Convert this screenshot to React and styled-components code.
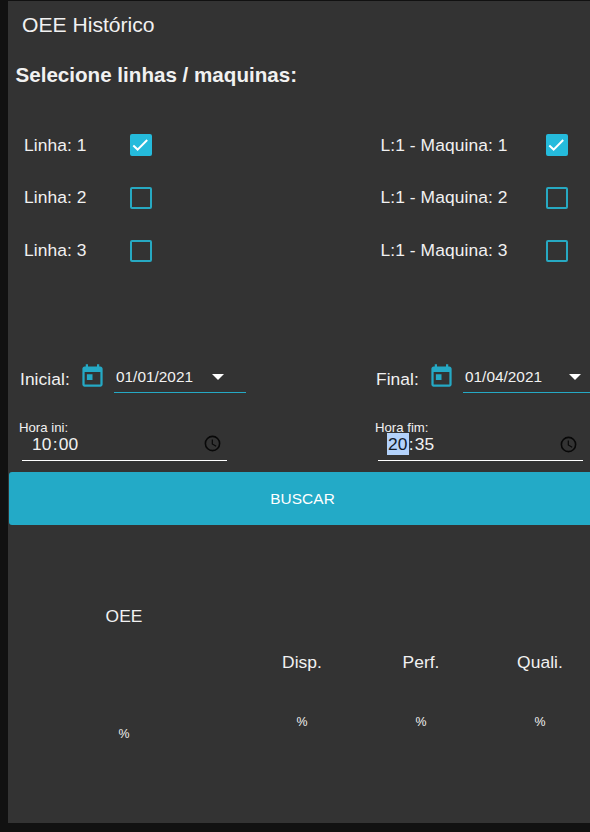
import React from "react";
import styled, { createGlobalStyle } from "styled-components";

const GlobalStyle = createGlobalStyle`
  * { box-sizing: border-box; }
  body {
    margin: 0;
    background: #111;
    color: #f1f1f1;
    font-family: "Liberation Sans", Arial, sans-serif;
    overflow: hidden;
  }
`;

const Page = styled.div`
  height: 832px;
  padding: 1px 0 9px 8px;
  overflow: hidden;
`;

const Panel = styled.main`
  height: 822px;
  background: #333;
`;

const Title = styled.h1`
  margin: 0;
  padding: 12px 0 0 14px;
  font-size: 21.12px;
  font-weight: 400;
  line-height: 24px;
`;

const Subtitle = styled.h2`
  margin: 0;
  padding: 26px 0 0 7.5px;
  font-size: 20.6px;
  font-weight: 700;
  line-height: 24px;
`;

const Selection = styled.section`
  display: grid;
  grid-template-columns: 356px 1fr;
  height: 272px;
  padding-top: 32px;
`;

const CheckList = styled.div`
  display: grid;
  grid-auto-rows: 52.7px;
  align-content: start;
  padding-left: 16px;
`;

const CheckRow = styled.label`
  display: flex;
  align-items: center;
  font-size: 17.4px;
  letter-spacing: 0.08px;
  line-height: 22px;
`;

const CheckText = styled.span`
  width: ${(p) => p.$width}px;
  padding: 0 0 1.2px ${(p) => p.$indent || 0}px;
  white-space: nowrap;
`;

const Box = styled.span`
  display: flex;
  width: 22px;
  height: 22px;
  border: 2px solid ${(p) => (p.$checked ? "#25bbdc" : "#27a9c2")};
  border-radius: 2px;
  background: ${(p) => (p.$checked ? "#25bbdc" : "transparent")};
  svg { width: 18px; height: 18px; }
`;

const Dates = styled.section`
  display: grid;
  grid-template-columns: 356px 1fr;
  height: 34px;
`;

const DateField = styled.div`
  display: flex;
  padding-left: 12px;
`;

const DateLabel = styled.span`
  flex: none;
  width: ${(p) => p.$width}px;
  padding-top: 9px;
  font-size: 17.4px;
  letter-spacing: 0.06px;
  line-height: 22px;
`;

const CalendarIcon = styled.svg`
  flex: none;
  width: 27px;
  height: 27px;
  margin: 3.5px 8px 0 0;
  fill: #25a9c5;
`;

const DateValue = styled.div`
  display: flex;
  flex: none;
  justify-content: space-between;
  width: ${(p) => p.$width}px;
  padding: 8px ${(p) => p.$end}px 0 2.4px;
  border-bottom: 1px solid #25a9c5;
  font-size: 15.4px;
  line-height: 20px;
`;

const Caret = styled.svg`
  width: 12px;
  height: 6px;
  margin-top: 7px;
  fill: #fff;
`;

const Times = styled.section`
  display: grid;
  grid-template-columns: 356px 1fr;
  height: 79px;
  padding-top: 27px;
`;

const TimeField = styled.div`
  padding-left: 11px;
`;

const TimeLabel = styled.div`
  height: 13px;
  font-size: 13.2px;
  line-height: 16px;
`;

const TimeValue = styled.div`
  display: flex;
  align-items: flex-start;
  width: 205px;
  height: 28px;
  margin-left: 3px;
  padding: 0 5.5px 0 9px;
  border-bottom: 1px solid #fff;
  font-size: 17.4px;
  letter-spacing: 0.15px;
  line-height: 22px;
`;

const Segment = styled.span`
  height: 22px;
  padding: 0 1px;
  color: ${(p) => (p.$selected ? "#111b2b" : "inherit")};
  background: ${(p) => (p.$selected ? "#b3d2fb" : "transparent")};
`;

const ClockIcon = styled.svg`
  width: 19px;
  height: 19px;
  margin: ${(p) => p.$top}px 0 0 auto;
  fill: #080808;
`;

const SearchButton = styled.button`
  display: block;
  width: calc(100% + 8px);
  height: 53px;
  margin: 0 0 0 1px;
  padding: 0 3px 0 0;
  border: 0;
  border-radius: 3px;
  background: #23aac7;
  color: #fff;
  font: 15.4px "Liberation Sans", Arial, sans-serif;
  letter-spacing: 0.1px;
`;

const Metrics = styled.section`
  display: grid;
  grid-template-columns: 232px 124px 114px 124px;
  padding-top: 80px;
`;

const Metric = styled.div`
  display: flex;
  flex-direction: column;
  align-items: center;
  gap: ${(p) => (p.$main ? 98 : 40)}px;
  padding-top: ${(p) => (p.$main ? 0 : 46)}px;
`;

const MetricName = styled.span`
  font-size: 17.4px;
  letter-spacing: 0.06px;
  line-height: 22px;
`;

const Percent = styled.span`
  font-size: 12.4px;
  line-height: 18px;
`;

function Check({ label, width, indent, checked }) {
  return (
    <CheckRow>
      <CheckText $width={width} $indent={indent}>{label}</CheckText>
      <Box $checked={checked} role="checkbox" aria-checked={checked}>
        {checked && (
          <svg viewBox="0 0 18 18" fill="none" stroke="#fff" strokeWidth="2">
            <path d="M1.3 9.6 5.6 13.6 15.2 4" />
          </svg>
        )}
      </Box>
    </CheckRow>
  );
}

function DatePick({ label, labelWidth, value, width, end }) {
  return (
    <DateField>
      <DateLabel $width={labelWidth}>{label}</DateLabel>
      <CalendarIcon viewBox="0 0 24 24">
        <path d="M19 3h-1V1h-2v2H8V1H6v2H5c-1.11 0-1.99.9-1.99 2L3 19c0 1.1.89 2 2 2h14c1.1 0 2-.9 2-2V5c0-1.1-.9-2-2-2zm0 16H5V8h14v11zM7 10h5v5H7z" />
      </CalendarIcon>
      <DateValue $width={width} $end={end}>
        {value}
        <Caret viewBox="0 0 12 6"><path d="M0 0h12L6 6z" /></Caret>
      </DateValue>
    </DateField>
  );
}

function TimePick({ label, hour, minute, selected, iconTop }) {
  return (
    <TimeField>
      <TimeLabel>{label}</TimeLabel>
      <TimeValue>
        <Segment $selected={selected}>{hour}</Segment>:<Segment>{minute}</Segment>
        <ClockIcon viewBox="0 0 24 24" $top={iconTop}>
          <path d="M12 2a10 10 0 1 0 0 20 10 10 0 0 0 0-20zm0 18a8 8 0 1 1 0-16 8 8 0 0 1 0 16zm.5-13H11v6l5.2 3.2.8-1.3-4.5-2.7z" />
        </ClockIcon>
      </TimeValue>
    </TimeField>
  );
}

const items = [1, 2, 3];
const metrics = ["OEE", "Disp.", "Perf.", "Quali."];

export default function App() {
  return (
    <Page>
      <GlobalStyle />
      <Panel>
        <Title>OEE Histórico</Title>
        <Subtitle>Selecione linhas / maquinas:</Subtitle>
        <Selection>
          <CheckList>
            {items.map((n) => (
              <Check key={n} label={`Linha: ${n}`} width={106} checked={n === 1} />
            ))}
          </CheckList>
          <CheckList>
            {items.map((n) => (
              <Check key={n} label={`L:1 - Maquina: ${n}`} width={166} indent={0.5} checked={n === 1} />
            ))}
          </CheckList>
        </Selection>
        <Dates>
          <DatePick label="Inicial:" labelWidth={58.6} value="01/01/2021" width={132} end={22} />
          <DatePick label="Final:" labelWidth={51.6} value="01/04/2021" width={134} end={16} />
        </Dates>
        <Times>
          <TimePick label="Hora ini:" hour="10" minute="00" iconTop={0.5} />
          <TimePick label="Hora fim:" hour="20" minute="35" selected iconTop={2} />
        </Times>
        <SearchButton>BUSCAR</SearchButton>
        <Metrics>
          {metrics.map((name, i) => (
            <Metric key={name} $main={i === 0}>
              <MetricName>{name}</MetricName>
              <Percent>%</Percent>
            </Metric>
          ))}
        </Metrics>
      </Panel>
    </Page>
  );
}
